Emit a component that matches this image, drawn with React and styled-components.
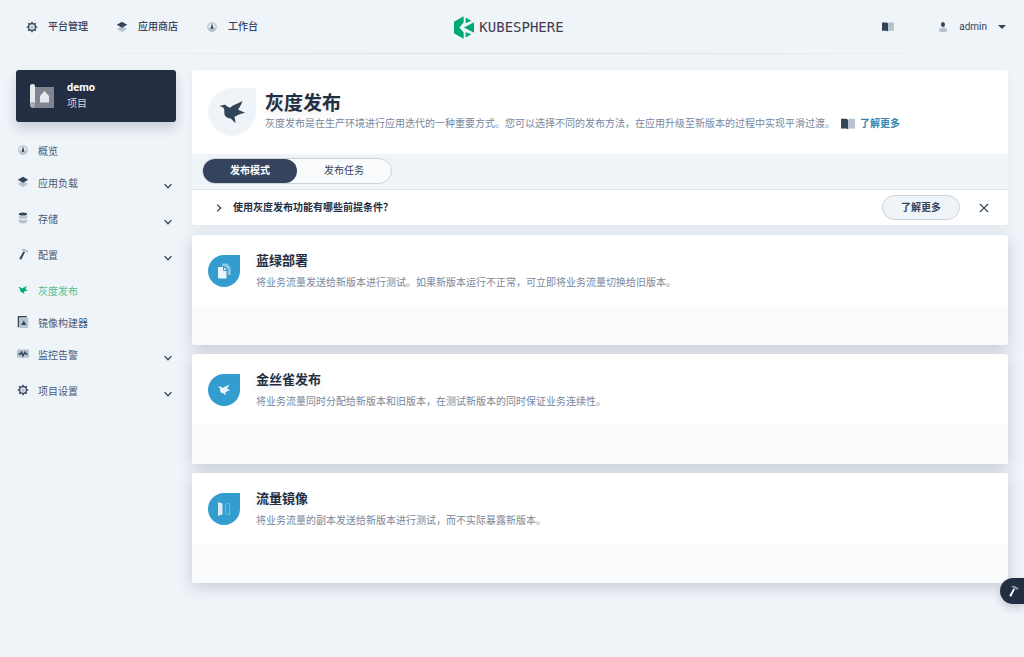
import React from "react";
import styled, { createGlobalStyle, css } from "styled-components";

const GlobalStyle = createGlobalStyle`
	* {
		box-sizing: border-box;
	}

	body {
		margin: 0;
		min-height: 100vh;
		background: #eff4f9;
		color: #242e42;
		font-family: Roboto, "Noto Sans CJK SC", sans-serif;
		font-size: 10px;
		line-height: 16px;
	}

	h1, h2, p, ul {
		margin: 0;
		padding: 0;
	}

	a {
		color: inherit;
		text-decoration: none;
	}

	button {
		margin: 0;
		padding: 0;
		border: 0;
		background: none;
		color: inherit;
		font: inherit;
		cursor: pointer;
	}

	svg {
		display: block;
		flex: none;
	}
`;

/* icons: $dark is the main tone, $light the secondary one */

const Svg = styled.svg`
	width: ${p => p.$size || 12}px;
	height: ${p => p.$size || 12}px;
	--dark: ${p => p.$dark || "#324558"};
	--light: ${p => p.$light || "#b6c2cd"};
`;

const Gear = props => (
	<Svg viewBox="0 0 16 16" aria-hidden="true" {...props}>
		<path
			d="M8 1v3M8 12v3M1 8h3M12 8h3M3 3l2.200 2.200M10.800 10.800 13 13M3 13l2.200-2.200M10.800 5.200 13 3"
			stroke="var(--dark)"
			strokeWidth="2"
		/>
		<circle cx="8" cy="8" r="4.500" fill="#eff4f9" stroke="var(--dark)" strokeWidth="1.600" />
		<circle cx="8" cy="8" r="2.500" fill="var(--light)" />
	</Svg>
);

const Layers = props => (
	<Svg viewBox="0 0 16 16" aria-hidden="true" {...props}>
		<path d="M2 10 8 7l6 3v1l-6 3.500L2 11z" fill="var(--light)" />
		<path d="M1 5 8 1l7 4-7 4z" fill="var(--dark)" />
	</Svg>
);

const Dashboard = props => (
	<Svg viewBox="0 0 16 16" aria-hidden="true" {...props}>
		<circle cx="8" cy="8" r="5.8" fill="#dfe6ee" stroke="var(--light)" strokeWidth="1.4" />
		<path d="M2.500 9h11A5.600 5.600 0 0 1 8 14 5.600 5.600 0 0 1 2.500 9z" fill="var(--light)" />
		<path d="m8 3 1.500 5.500a1.600 1.600 0 1 1-3 0z" fill="var(--dark)" />
	</Svg>
);

const Database = props => (
	<Svg viewBox="0 0 16 16" aria-hidden="true" {...props}>
		<path d="M2.500 4.500c3 1.500 8 1.500 11 0v3.500c-3 1.500-8 1.500-11 0zM2.500 9.800c3 1.500 8 1.500 11 0v4c-3 2-8 2-11 0z" fill="var(--light)" />
		<ellipse cx="8" cy="2.500" rx="5.500" ry="2" fill="var(--dark)" />
	</Svg>
);

const Hammer = props => (
	<Svg viewBox="0 0 16 16" aria-hidden="true" {...props}>
		<path d="M5 2C7.500.5 11 .5 12.500 2.500L15.500 4 14 6.500l-3-1.500-2.500-.8C7.500 3 6.500 2.500 5 2z" fill="var(--light)" />
		<path d="m8.500 4.500 2.200 1.200-5.200 9.800-2.500-1.200z" fill="var(--dark)" />
	</Svg>
);

const Bird = props => (
	<Svg viewBox="11 10 100 100" aria-hidden="true" {...props}>
		<path
			d="M21 41 34 38c5-1 9 0 12 5l9 4c9-9 25-12 39-21-4 10-9 20-14 27l22 9c-8 2-17 4-24 8-4 2-6 4-9 4l3 21-15-15c-8 0-16-4-19-11-2-7 0-13-2-19-2-5-7-7-15-9z"
			fill="var(--dark)"
		/>
	</Svg>
);

const ImageBuilder = props => (
	<Svg viewBox="0 0 16 16" aria-hidden="true" {...props}>
		<path d="M1 0h12v2H3v13H1z" fill="var(--dark)" />
		<path d="M3 2h12v14H3z" fill="var(--light)" />
		<path d="m9 6 3.500 6h-7z" fill="var(--dark)" />
	</Svg>
);

const Monitor = props => (
	<Svg viewBox="0 0 16 16" aria-hidden="true" {...props}>
		<rect x="0" y="2" width="16" height="11" rx="1" fill="var(--light)" />
		<path d="M2 8h2.500l1.500-2.500 2 5 2.500-5L12 8h2" fill="none" stroke="var(--dark)" strokeWidth="1.800" />
	</Svg>
);

const Book = props => (
	<Svg viewBox="0 0 16 16" aria-hidden="true" {...props}>
		<path d="M0 2h6l2 1v11l-2-1H0z" fill="var(--dark)" />
		<path d="M16 2h-6L8 3v11l2-1h6z" fill="var(--light)" />
	</Svg>
);

const User = props => (
	<Svg viewBox="0 0 16 16" aria-hidden="true" {...props}>
		<path d="M1.500 13c0-3 3-4 6.500-4s6.500 1 6.500 4-2 3-6.500 3-6.500 0-6.500-3z" fill="var(--light)" />
		<ellipse cx="8" cy="4" rx="3.200" ry="4" fill="var(--dark)" />
	</Svg>
);

const Project = props => (
	<Svg viewBox="0 0 24 24" aria-hidden="true" {...props}>
		<path d="M5 3h19v21H2v-4h3z" fill="#7f8593" />
		<path d="M0 2a2.500 2 0 0 1 5 0v17H2c-1 0-2 1-2 2z" fill="#e6e8ec" />
		<path d="M0 21a2.500 2.500 0 0 1 5-1v2l-2 2c-2 0-3-1-3-3z" fill="#a9aeb8" />
		<path d="m14.500 7 4.500 5v6.500h-9V12z" fill="#e6e8ec" />
	</Svg>
);

const Copies = props => (
	<Svg viewBox="0 0 16 16" aria-hidden="true" {...props}>
		<path d="M6 .5h5l3.500 4V12H12V6.500L8.500 3H6z" fill="#8dc8e4" />
		<path d="M3 4h4.500L10.500 7v8.500H3a1 1 0 0 1-1-1V5a1 1 0 0 1 1-1z" fill="#eaf5fb" />
		<path d="M7.500 4v3.500H11" fill="none" stroke="#329dce" />
	</Svg>
);

const Mirror = props => (
	<Svg viewBox="0 0 16 16" aria-hidden="true" {...props}>
		<path d="m2 1 4.500 1.500v11L2 15z" fill="#d9eef8" />
		<path d="m13.500 2-4 1.500v9l4 1.500z" fill="none" stroke="#70bbdf" />
	</Svg>
);

const Chevron = props => (
	<Svg viewBox="0 0 16 16" aria-hidden="true" {...props}>
		<path d="m3.500 5.500 4.500 4.800 4.500-4.800" fill="none" stroke="var(--dark)" strokeWidth="1.800" />
	</Svg>
);

const Cross = props => (
	<Svg viewBox="0 0 16 16" aria-hidden="true" {...props}>
		<path d="m2.500 2.500 11 11m0-11-11 11" stroke="var(--dark)" strokeWidth="1.800" />
	</Svg>
);

const Caret = props => (
	<Svg viewBox="0 0 8 8" aria-hidden="true" {...props}>
		<path d="M0 2h8L4 6z" fill="var(--dark)" />
	</Svg>
);

/* header */

const Header = styled.header`
	display: grid;
	grid-template-columns: 1fr auto 1fr;
	align-items: center;
	height: 54px;
	padding: 0 18px 0 12px;
	background: linear-gradient(to right, transparent, #dbe2ea 40%, #dbe2ea 60%, transparent) bottom / 100% 1px no-repeat;
`;

const TopNav = styled.nav`
	display: flex;
	gap: 28px;
	padding-left: 14px;
`;

const TopLink = styled.a`
	display: flex;
	align-items: center;
	gap: 10px;
	color: #36435c;
	font-weight: 500;
`;

const Brand = styled.a`
	display: flex;
	align-items: center;
	gap: 5px;
	color: #453a50;
	font-family: "DejaVu Sans Mono", monospace;
	font-size: 14px;
	line-height: 24px;

	svg {
		width: 20px;
		height: 23px;
	}
`;

const HeaderTools = styled.div`
	display: flex;
	align-items: center;
	justify-content: flex-end;
	gap: 44px;
`;

const UserMenu = styled.button`
	display: flex;
	align-items: center;
	gap: 11px;
	color: #36435c;
`;

/* layout */

const Body = styled.div`
	display: flex;
	align-items: flex-start;
	gap: 16px;
	padding: 16px;
`;

const Sidebar = styled.aside`
	flex: none;
	width: 160px;
`;

const Main = styled.main`
	flex: 1;
	min-width: 0;
	display: flex;
	flex-direction: column;
	gap: 9px;
`;

const ProjectCard = styled.button`
	display: flex;
	align-items: center;
	gap: 13px;
	width: 100%;
	height: 52px;
	padding: 0 14px;
	border-radius: 3px;
	background: #242e42;
	box-shadow: 0 6px 12px rgba(36, 46, 66, 0.2);
	color: #d5d8de;
	text-align: left;

	strong {
		display: block;
		color: #fff;
		font-size: 11px;
		font-weight: 700;
	}
`;

const Menu = styled.ul`
	margin-top: 15px;
	list-style: none;
`;

const menuRow = css`
	display: flex;
	align-items: flex-start;
	gap: 9px;
	width: 100%;
	padding: 7px 2px 0 1px;
	color: ${p => (p.$active ? "#55bc8a" : "#4a5974")};
	text-align: left;

	span {
		flex: 1;
	}
`;

const MenuLink = styled.a`
	${menuRow}
	height: 32px;
`;

const MenuButton = styled.button`
	${menuRow}
	height: 36px;

	svg:last-child {
		margin-top: 4px;
	}
`;

/* banner */

const Banner = styled.section`
	margin-bottom: 1px;
	border-radius: 3px;
	overflow: hidden;
	background: #fff;
	box-shadow: 0 4px 8px rgba(36, 46, 66, 0.05);
`;

const BannerHead = styled.div`
	display: flex;
	align-items: center;
	gap: 9px;
	height: 84px;
	padding: 0 16px;
`;

const Drop = styled.div`
	display: flex;
	flex: none;
	align-items: center;
	justify-content: center;
	width: ${p => p.$size}px;
	height: ${p => p.$size}px;
	border-radius: 50% 0 50% 50%;
	background: ${p => p.$color};
`;

const PageTitle = styled.h1`
	font-size: 19px;
	font-weight: 700;
	line-height: 24px;
	text-shadow: 0 4px 8px rgba(36, 46, 66, 0.1);
`;

const Description = styled.p`
	color: #79879c;
`;

const DescriptionRow = styled.div`
	display: flex;
	align-items: center;
	gap: 6px;
`;

const MoreLink = styled.a`
	display: flex;
	align-items: center;
	gap: 5px;
	color: #3385b0;
	font-weight: 700;
`;

const TabBar = styled.div`
	display: flex;
	padding: 4px 10px 5px;
	border-bottom: 1px solid #dde4ec;
	background: #eff4f9;
`;

const Tabs = styled.div`
	display: flex;
	border: 1px solid #ccd3db;
	border-radius: 13px;
	background: #f9fbfd;
`;

const Tab = styled.button`
	width: 94px;
	height: 24px;
	border-radius: 12px;
	background: ${p => (p.$active ? "#36435c" : "transparent")};
	color: ${p => (p.$active ? "#fff" : "#36435c")};
	font-weight: ${p => (p.$active ? 700 : 400)};
`;

const Tip = styled.div`
	display: flex;
	align-items: center;
	height: 35px;
	padding: 0 18px 0 21px;
`;

const TipToggle = styled.button`
	display: flex;
	flex: 1;
	align-items: center;
	gap: 8px;
	font-weight: 700;

	svg {
		transform: rotate(-90deg);
	}
`;

const PillButton = styled.button`
	height: 25px;
	padding: 0 18px;
	border: 1px solid #ccd3db;
	border-radius: 13px;
	background: #eff4f9;
	color: #36435c;
	font-weight: 700;
`;

const CloseButton = styled.button`
	margin-left: 18px;
`;

/* release modes */

const Card = styled.article`
	border-radius: 3px;
	overflow: hidden;
	background: #fff;
	box-shadow: 0 4px 16px rgba(36, 46, 66, 0.2);
`;

const CardHead = styled.div`
	display: flex;
	align-items: center;
	gap: 16px;
	height: 71px;
	padding: 0 16px;
`;

const CardTitle = styled.h2`
	margin-bottom: 4px;
	font-size: 13px;
	font-weight: 700;
	line-height: 20px;
	text-shadow: 0 4px 8px rgba(36, 46, 66, 0.1);
`;

const CardFoot = styled.div`
	height: 39px;
	background: #f9fbfd;
`;

const ToolboxButton = styled.button`
	position: fixed;
	right: 0;
	bottom: 53px;
	display: flex;
	align-items: center;
	width: 24px;
	height: 26px;
	padding-left: 7px;
	border-radius: 13px 0 0 13px;
	background: #242e42;
	box-shadow: 0 4px 8px rgba(36, 46, 66, 0.2);
`;

const topLinks = [
	{ title: "平台管理", icon: Gear },
	{ title: "应用商店", icon: Layers },
	{ title: "工作台", icon: Dashboard },
];

const menu = [
	{ title: "概览", icon: Dashboard },
	{ title: "应用负载", icon: Layers, open: true },
	{ title: "存储", icon: Database, open: true },
	{ title: "配置", icon: Hammer, open: true },
	{ title: "灰度发布", icon: Bird, active: true },
	{ title: "镜像构建器", icon: ImageBuilder },
	{ title: "监控告警", icon: Monitor, open: true },
	{ title: "项目设置", icon: Gear, open: true },
];

const modes = [
	{
		title: "蓝绿部署",
		icon: Copies,
		text: "将业务流量发送给新版本进行测试。如果新版本运行不正常，可立即将业务流量切换给旧版本。",
	},
	{
		title: "金丝雀发布",
		icon: Bird,
		text: "将业务流量同时分配给新版本和旧版本，在测试新版本的同时保证业务连续性。",
	},
	{
		title: "流量镜像",
		icon: Mirror,
		text: "将业务流量的副本发送给新版本进行测试，而不实际暴露新版本。",
	},
];

const MenuItem = ({ title, icon: Icon, open, active }) => {
	const Row = open ? MenuButton : MenuLink;
	return (
		<li>
			<Row href={open ? undefined : "#"} $active={active}>
				<Icon $dark={active ? "#00aa72" : undefined} />
				<span>{title}</span>
				{open && <Chevron />}
			</Row>
		</li>
	);
};

const App = () => (
	<>
		<GlobalStyle />
		<Header>
			<TopNav>
				{topLinks.map(({ title, icon: Icon }) => (
					<TopLink href="#" key={title}>
						<Icon />
						{title}
					</TopLink>
				))}
			</TopNav>
			<Brand href="#">
				<svg viewBox="75 47 60 68" aria-hidden="true">
					<path d="M75 64 104 47v19L91 81l13 15v19L75 98z" fill="#00a971" />
					<path d="m110 51 17 10-17 7zM105 81l30-16v32zM110 95l17 6-17 10z" fill="#00a971" />
				</svg>
				KUBESPHERE
			</Brand>
			<HeaderTools>
				<button aria-label="文档">
					<Book />
				</button>
				<UserMenu>
					<User $size={10} />
					admin
					<Caret $size={8} />
				</UserMenu>
			</HeaderTools>
		</Header>
		<Body>
			<Sidebar>
				<ProjectCard>
					<Project $size={24} />
					<span>
						<strong>demo</strong>
						项目
					</span>
				</ProjectCard>
				<Menu>
					{menu.map(item => (
						<MenuItem key={item.title} {...item} />
					))}
				</Menu>
			</Sidebar>
			<Main>
				<Banner>
					<BannerHead>
						<Drop $size={48} $color="#eff4f9">
							<Bird $size={32} />
						</Drop>
						<div>
							<PageTitle>灰度发布</PageTitle>
							<DescriptionRow>
								<Description>
									灰度发布是在生产环境进行应用迭代的一种重要方式。您可以选择不同的发布方法，在应用升级至新版本的过程中实现平滑过渡。
								</Description>
								<MoreLink href="#">
									<Book $size={14} />
									了解更多
								</MoreLink>
							</DescriptionRow>
						</div>
					</BannerHead>
					<TabBar>
						<Tabs role="tablist">
							<Tab role="tab" aria-selected="true" $active>
								发布模式
							</Tab>
							<Tab role="tab" aria-selected="false">
								发布任务
							</Tab>
						</Tabs>
					</TabBar>
					<Tip>
						<TipToggle>
							<Chevron />
							使用灰度发布功能有哪些前提条件？
						</TipToggle>
						<PillButton>了解更多</PillButton>
						<CloseButton aria-label="关闭">
							<Cross />
						</CloseButton>
					</Tip>
				</Banner>
				{modes.map(({ title, icon: Icon, text }) => (
					<Card key={title}>
						<CardHead>
							<Drop $size={32} $color="#329dce">
								<Icon $size={16} $dark="#eaf5fb" />
							</Drop>
							<div>
								<CardTitle>{title}</CardTitle>
								<Description>{text}</Description>
							</div>
						</CardHead>
						<CardFoot />
					</Card>
				))}
			</Main>
		</Body>
		<ToolboxButton aria-label="工具箱">
			<Hammer $dark="#fff" $light="#8b92a1" />
		</ToolboxButton>
	</>
);

export default App;
